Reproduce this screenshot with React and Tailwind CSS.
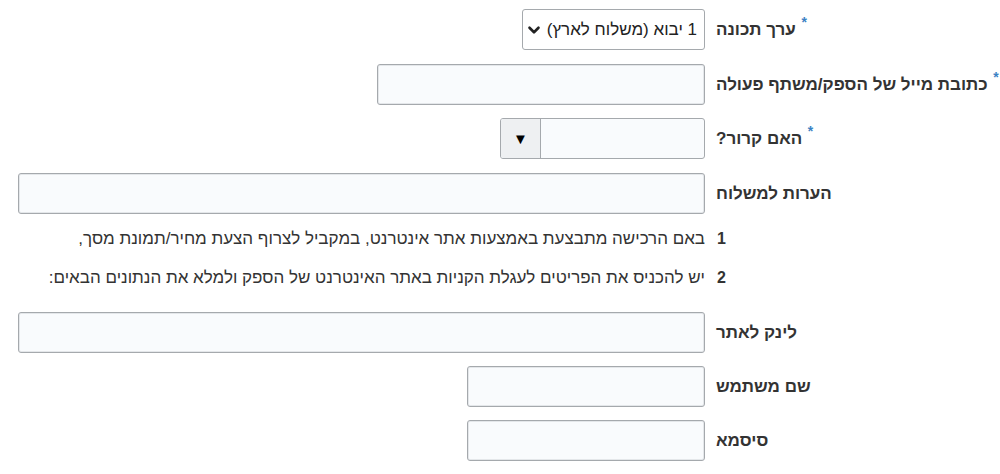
import { ChevronDown } from "lucide-react";

const FONT = "font-['Liberation_Sans','DejaVu_Sans',sans-serif]";

function Label({ text, required }) {
  return (
    <div className="w-[295px] shrink-0 flex justify-end pl-[11px]">
      <span className="relative text-[17px] font-bold text-[#333] leading-none">
        {required && (
          <span className="absolute -right-[11px] -top-[6px] text-[14px] text-[#3b82c4]">*</span>
        )}
        {text}
      </span>
    </div>
  );
}

function TextBox({ width }) {
  return (
    <div
      className={`h-[41px] ${width} rounded-[3px] border border-[#a5a9ad] bg-[#f9fbfd] shadow-[inset_0_0_0_1px_#e4e7ea]`}
    />
  );
}

function Row({ label, required, top, children }) {
  return (
    <div className={`flex items-center ${top}`}>
      <Label text={label} required={required} />
      <div className="flex">{children}</div>
    </div>
  );
}

function Note({ num, text, top }) {
  return (
    <div className={`flex items-center h-[20px] ${top}`}>
      <div className="w-[295px] shrink-0 flex justify-end pl-[12px]">
        <span className="text-[16px] font-bold text-[#333]">{num}</span>
      </div>
      <span className="text-[17px] text-[#333] whitespace-nowrap">{text}</span>
    </div>
  );
}

export default function App() {
  return (
    <div dir="rtl" className={`w-[1000px] h-[474px] bg-white ${FONT} pt-[9px]`}>
      <Row label="ערך תכונה" required top="">
        <div className="h-[41px] w-[183px] rounded-[3px] border border-[#a5a9ad] bg-white flex items-center justify-between pr-[7px] pl-[2px]">
          <span className="text-[17px] text-[#222]">1 יבוא (משלוח לארץ)</span>
          <ChevronDown size={18} strokeWidth={3.5} className="text-[#222]" />
        </div>
      </Row>

      <Row label="כתובת מייל של הספק/משתף פעולה" required top="mt-[14px]">
        <TextBox width="w-[328px]" />
      </Row>

      <Row label="האם קרור?" required top="mt-[13px]">
        <div className="h-[41px] w-[205px] rounded-[3px] border border-[#a5a9ad] bg-[#f9fbfd] flex overflow-hidden">
          <div className="flex-1" />
          <div className="w-[40px] border-r border-[#a5a9ad] bg-[#eef0f2] flex items-center justify-center">
            <span className="text-[15px] text-black leading-none">▼</span>
          </div>
        </div>
      </Row>

      <Row label="הערות למשלוח" top="mt-[14px]">
        <TextBox width="w-[687px]" />
      </Row>

      <Note
        num="1"
        text="באם הרכישה מתבצעת באמצעות אתר אינטרנט, במקביל לצרוף הצעת מחיר/תמונת מסך,"
        top="mt-[15px]"
      />
      <Note
        num="2"
        text="יש להכניס את הפריטים לעגלת הקניות באתר האינטרנט של הספק ולמלא את הנתונים הבאים:"
        top="mt-[19px]"
      />

      <Row label="לינק לאתר" top="mt-[24px]">
        <TextBox width="w-[687px]" />
      </Row>

      <Row label="שם משתמש" top="mt-[13px]">
        <TextBox width="w-[238px]" />
      </Row>

      <Row label="סיסמא" top="mt-[13px]">
        <TextBox width="w-[238px]" />
      </Row>
    </div>
  );
}
